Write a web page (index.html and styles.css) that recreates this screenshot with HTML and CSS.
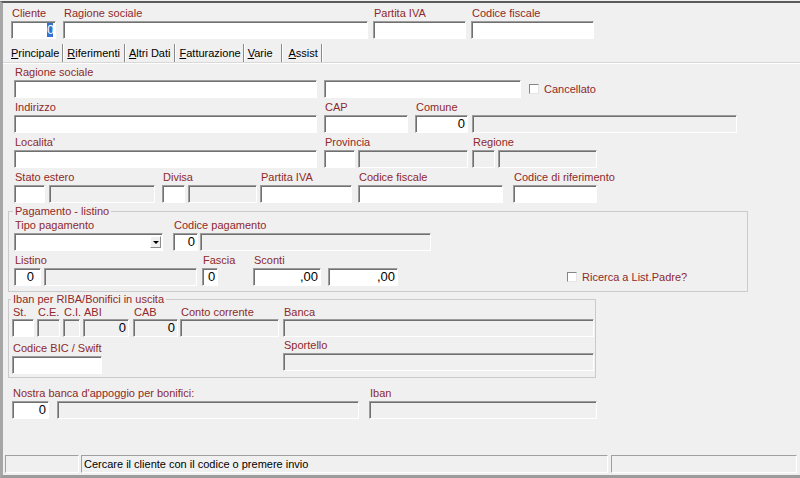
FILE: index.html
```html
<!DOCTYPE html>
<html lang="it">
<head>
  <meta charset="UTF-8" />
  <meta name="viewport" content="width=device-width, initial-scale=1.0"/>
  <title>Anagrafica clienti</title>
  <link rel="stylesheet" href="styles.css">
</head>
<body>
<div class="window">

  <div class="head">
    <div class="field"><span class="lbl">Cliente</span><div class="box w45"><span class="sel">0</span></div></div>
    <div class="field ml7"><span class="lbl">Ragione sociale</span><div class="box w305"></div></div>
    <div class="field ml5"><span class="lbl">Partita IVA</span><div class="box w93"></div></div>
    <div class="field ml5"><span class="lbl">Codice fiscale</span><div class="box w123"></div></div>
  </div>

  <div class="tabs">
    <span class="tab first"><u>P</u>rincipale</span>
    <span class="tab"><u>R</u>iferimenti</span>
    <span class="tab"><u>A</u>ltri Dati</span>
    <span class="tab narrow"><u>F</u>atturazione</span>
    <span class="tab wide"><u>V</u>arie</span>
    <span class="tab last"><u>A</u>ssist</span>
  </div>

  <div class="page">
    <div class="main rows">
      <div class="row">
        <div class="field"><span class="lbl">Ragione sociale</span><div class="box w303"></div></div>
        <div class="box w197 ml7"></div>
        <label class="check ml8"><i></i>Cancellato</label>
      </div>
      <div class="row">
        <div class="field"><span class="lbl">Indirizzo</span><div class="box w303"></div></div>
        <div class="field ml7"><span class="lbl">CAP</span><div class="box w84"></div></div>
        <div class="field ml7"><span class="lbl">Comune</span>
          <div class="pair"><div class="box w53">0</div><div class="box off w265 ml4"></div></div>
        </div>
      </div>
      <div class="row">
        <div class="field"><span class="lbl">Localita'</span><div class="box w303"></div></div>
        <div class="field ml7"><span class="lbl">Provincia</span>
          <div class="pair"><div class="box w31"></div><div class="box off w110 ml3"></div></div>
        </div>
        <div class="field ml4"><span class="lbl">Regione</span>
          <div class="pair"><div class="box off w23"></div><div class="box off w99 ml3"></div></div>
        </div>
      </div>
      <div class="row">
        <div class="field"><span class="lbl">Stato estero</span>
          <div class="pair"><div class="box w31"></div><div class="box off w106 ml4"></div></div>
        </div>
        <div class="field ml7"><span class="lbl">Divisa</span>
          <div class="pair"><div class="box w23"></div><div class="box off w69 ml3"></div></div>
        </div>
        <div class="field ml3"><span class="lbl">Partita IVA</span><div class="box w92"></div></div>
        <div class="field ml6"><span class="lbl">Codice fiscale</span><div class="box w145"></div></div>
        <div class="field ml10"><span class="lbl">Codice di riferimento</span><div class="box w84"></div></div>
      </div>
    </div>

    <fieldset class="group pay">
      <legend>Pagamento - listino</legend>
      <div class="rows">
        <div class="row">
          <div class="field"><span class="lbl">Tipo pagamento</span><div class="box combo w149"><span class="drop"></span></div></div>
          <div class="field ml10"><span class="lbl">Codice pagamento</span>
            <div class="pair"><div class="box w25">0</div><div class="box off w231 ml2"></div></div>
          </div>
        </div>
        <div class="row">
          <div class="field"><span class="lbl">Listino</span>
            <div class="pair"><div class="box w27 pad6">0</div><div class="box off w153 ml3"></div></div>
          </div>
          <div class="field ml5"><span class="lbl">Fascia</span><div class="box w16 left">0</div></div>
          <div class="field ml35"><span class="lbl">Sconti</span>
            <div class="pair"><div class="box w68">,00</div><div class="box w70 ml7">,00</div></div>
          </div>
          <label class="check ml169"><i></i>Ricerca a List.Padre?</label>
        </div>
      </div>
    </fieldset>

    <fieldset class="group iban">
      <legend>Iban per RIBA/Bonifici in uscita</legend>
      <div class="cols">
        <div class="col">
          <div class="row">
            <div class="field"><span class="lbl short">St.</span><div class="box w22"></div></div>
            <div class="field ml3"><span class="lbl short">C.E.</span><div class="box off w23"></div></div>
            <div class="field ml3"><span class="lbl short">C.I.</span><div class="box off w17"></div></div>
            <div class="field ml3"><span class="lbl short">ABI</span><div class="box off w46">0</div></div>
            <div class="field ml4"><span class="lbl short">CAB</span><div class="box off w45">0</div></div>
            <div class="field ml2"><span class="lbl short">Conto corrente</span><div class="box off w99"></div></div>
          </div>
          <div class="row mt4">
            <div class="field"><span class="lbl">Codice BIC / Swift</span><div class="box w90"></div></div>
          </div>
        </div>
        <div class="col ml4">
          <div class="field"><span class="lbl short">Banca</span><div class="box off w311"></div></div>
          <div class="field mt1"><span class="lbl">Sportello</span><div class="box off w311"></div></div>
        </div>
      </div>
    </fieldset>

    <div class="row bank">
      <div class="field"><span class="lbl">Nostra banca d'appoggio per bonifici:</span>
        <div class="pair"><div class="box w37">0</div><div class="box off w302 ml8"></div></div>
      </div>
      <div class="field ml10"><span class="lbl">Iban</span><div class="box off w228"></div></div>
    </div>
  </div>

  <div class="status">
    <div class="panel w74"></div>
    <div class="panel w527 ml2">Cercare il cliente con il codice o premere invio</div>
    <div class="panel w186 ml3"></div>
  </div>

</div>
</body>
</html>
```

FILE: styles.css
```css
body {
  margin: 0;
  background: #f0f0f0;
  font-family: "Liberation Sans", Arial, sans-serif;
  font-size: 11px;
  color: #000;
}
.window {
  height: 477px;
  margin-top: 1px;
  box-sizing: border-box;
  border-top: 2px solid #5c5c5c;
  border-left: 3px solid #a6a6a6;
  border-bottom: 3px solid #9c9c9c;
  display: flex;
  flex-direction: column;
}

/* campi */
.head {
  display: flex;
  align-items: flex-end;
  padding: 3px 0 0 8px;
}
.row {
  display: flex;
  align-items: flex-end;
}
.rows {
  display: flex;
  flex-direction: column;
  gap: 2px;
}
.field {
  display: flex;
  flex-direction: column;
}
.pair {
  display: flex;
}
.lbl {
  width: 0;
  height: 15px;
  line-height: 15px;
  padding-left: 1px;
  white-space: nowrap;
  color: #8e2a2a;
}
.lbl.short {
  height: 13px;
  line-height: 13px;
}
.box {
  height: 18px;
  box-sizing: border-box;
  border: 1px solid;
  border-color: #9c9c9c #fff #fff #9c9c9c;
  box-shadow: inset 1px 1px 0 #707070;
  background: #fff;
  font-size: 13px;
  line-height: 16px;
  text-align: right;
  padding-right: 2px;
  white-space: nowrap;
  overflow: hidden;
}
.box.off { background: #f0f0f0; }
.box.left { text-align: left; padding-left: 5px; }
.box.pad6 { padding-right: 6px; }
.sel {
  display: inline-block;
  width: 6px;
  height: 14px;
  line-height: 14px;
  margin-top: 1px;
  vertical-align: top;
  overflow: hidden;
  background: #3572d4;
  color: #fff;
  text-align: left;
}
.combo {
  display: flex;
  justify-content: flex-end;
  align-items: center;
  padding-right: 1px;
}
.drop {
  width: 11px;
  height: 12px;
  box-sizing: border-box;
  border: 1px solid;
  border-color: #fff #8c8c8c #8c8c8c #fff;
  background: #f0f0f0;
  display: flex;
  align-items: center;
  justify-content: center;
}
.drop::after {
  content: "";
  border-left: 3px solid transparent;
  border-right: 3px solid transparent;
  border-top: 3px solid #000;
}
.check {
  display: flex;
  align-items: center;
  height: 18px;
  color: #8e2a2a;
  white-space: nowrap;
}
.check i {
  width: 10px;
  height: 10px;
  box-sizing: border-box;
  margin-right: 5px;
  border: 1px solid;
  border-color: #858585 #e6e6e6 #e6e6e6 #858585;
  background: #fff;
}

/* linguette */
.tabs {
  display: flex;
  height: 18px;
  margin-top: 5px;
  padding-left: 8px;
  line-height: 18px;
  border-bottom: 1px solid #d8d8d8;
  box-shadow: 0 1px 0 #fff;
}
.tab {
  padding: 0 4px;
  border-right: 1px solid #8a8a8a;
  box-shadow: 1px 0 0 #fff;
}
.tab.first { padding-left: 0; padding-right: 3px; }
.tab.narrow { padding-right: 2px; }
.tab.wide { padding-right: 8px; }
.tab.last { padding-left: 7px; padding-right: 3px; }

/* pagina */
.page {
  padding: 2px 0 0 5px;
}
.main {
  padding-left: 6px;
}
.group {
  margin: 1px 0 0 0;
  box-sizing: border-box;
  min-width: 0;
  border: 1px solid #cacaca;
}
.group legend {
  padding: 0 2px;
  margin-left: -1px;
  color: #8e2a2a;
}
.pay {
  width: 740px;
  padding: 0 0 5px 5px;
}
.pay legend { line-height: 14px; }
.iban {
  width: 588px;
  padding: 0 1px 3px 3px;
}
.iban legend { line-height: 13px; }
.cols { display: flex; }
.col {
  display: flex;
  flex-direction: column;
}
.bank {
  margin: 8px 0 0 4px;
}

/* barra di stato */
.status {
  display: flex;
  height: 18px;
  margin: auto 0 2px 2px;
}
.panel {
  box-sizing: border-box;
  border: 1px solid;
  border-color: #a0a0a0 #fff #fff #a0a0a0;
  padding-left: 2px;
  line-height: 16px;
  white-space: nowrap;
}

.ml2 { margin-left: 2px; }
.ml3 { margin-left: 3px; }
.ml4 { margin-left: 4px; }
.ml5 { margin-left: 5px; }
.ml6 { margin-left: 6px; }
.ml7 { margin-left: 7px; }
.ml8 { margin-left: 8px; }
.ml10 { margin-left: 10px; }
.ml35 { margin-left: 35px; }
.ml169 { margin-left: 169px; }
.mt1 { margin-top: 1px; }
.mt4 { margin-top: 4px; }

.w16 { width: 16px; }
.w17 { width: 17px; }
.w22 { width: 22px; }
.w23 { width: 23px; }
.w25 { width: 25px; }
.w27 { width: 27px; }
.w31 { width: 31px; }
.w37 { width: 37px; }
.w45 { width: 45px; }
.w46 { width: 46px; }
.w53 { width: 53px; }
.w68 { width: 68px; }
.w69 { width: 69px; }
.w70 { width: 70px; }
.w74 { width: 74px; }
.w84 { width: 84px; }
.w90 { width: 90px; }
.w92 { width: 92px; }
.w93 { width: 93px; }
.w99 { width: 99px; }
.w106 { width: 106px; }
.w110 { width: 110px; }
.w123 { width: 123px; }
.w145 { width: 145px; }
.w149 { width: 149px; }
.w153 { width: 153px; }
.w186 { width: 186px; }
.w197 { width: 197px; }
.w228 { width: 228px; }
.w231 { width: 231px; }
.w265 { width: 265px; }
.w302 { width: 302px; }
.w303 { width: 303px; }
.w305 { width: 305px; }
.w311 { width: 311px; }
.w527 { width: 527px; }
```
